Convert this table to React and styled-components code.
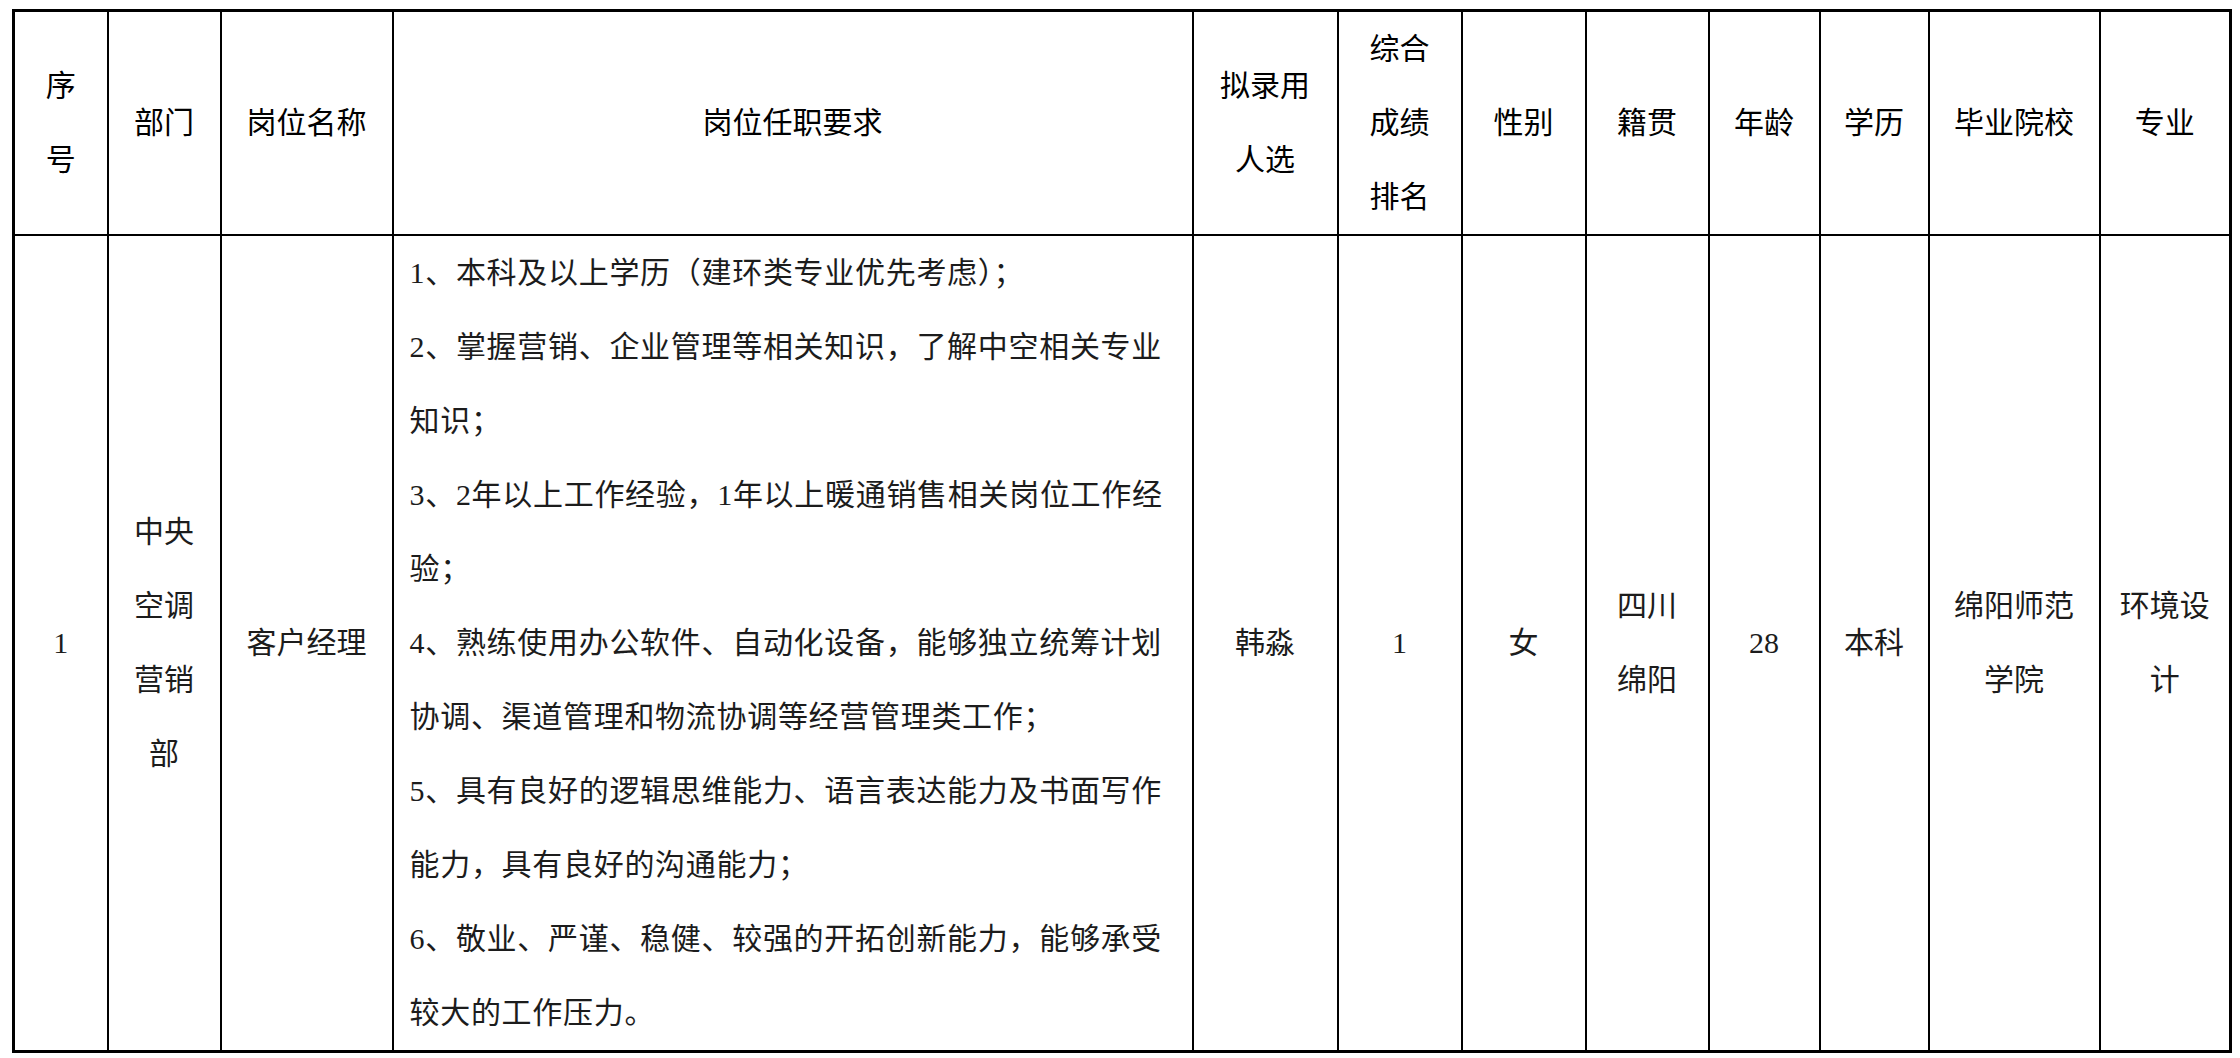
import React from 'react';
import styled, { createGlobalStyle } from 'styled-components';

const GlobalStyle = createGlobalStyle`
  html, body {
    margin: 0;
    padding: 0;
    background: #ffffff;
  }
  body {
    font-family: "Liberation Serif", "Noto Sans CJK SC", serif;
    color: #111;
  }
`;

const Page = styled.div`
  padding: 9px 0 0 12px;
  width: 2240px;
  height: 1058px;
  box-sizing: border-box;
  background: #fff;
`;

const Table = styled.table`
  width: 2217px;
  table-layout: fixed;
  border-collapse: collapse;
  border: 3px solid #000;
`;

const HeadRow = styled.tr`
  height: 224px;
`;

const BodyRow = styled.tr`
  height: 815px;
`;

const Cell = styled.td`
  border: 2px solid #000;
  padding: 0 14px;
  text-align: ${(p) => (p.$left ? 'left' : 'center')};
  vertical-align: ${(p) => (p.$top ? 'top' : 'middle')};
  font-family: "Liberation Serif", "Noto Sans CJK SC", serif;
  font-size: 30px;
  line-height: 74px;
  color: ${(p) => (p.$head ? '#000' : '#1c1c1c')};
  font-weight: 400;
  letter-spacing: ${(p) => (p.$left ? '0.7px' : '0')};
  white-space: nowrap;
  padding-left: ${(p) => (p.$left ? '16px' : '14px')};
`;

const Line = styled.div`
  height: 74px;
`;

const widths = [94, 113, 172, 800, 145, 124, 124, 123, 111, 109, 171, 131];

const headers = [
  ['序', '号'],
  ['部门'],
  ['岗位名称'],
  ['岗位任职要求'],
  ['拟录用', '人选'],
  ['综合', '成绩', '排名'],
  ['性别'],
  ['籍贯'],
  ['年龄'],
  ['学历'],
  ['毕业院校'],
  ['专业'],
];

const requirements = [
  '1、本科及以上学历（建环类专业优先考虑）；',
  '2、掌握营销、企业管理等相关知识，了解中空相关专业',
  '知识；',
  '3、2年以上工作经验，1年以上暖通销售相关岗位工作经',
  '验；',
  '4、熟练使用办公软件、自动化设备，能够独立统筹计划',
  '协调、渠道管理和物流协调等经营管理类工作；',
  '5、具有良好的逻辑思维能力、语言表达能力及书面写作',
  '能力，具有良好的沟通能力；',
  '6、敬业、严谨、稳健、较强的开拓创新能力，能够承受',
  '较大的工作压力。',
];

const row = [
  ['1'],
  ['中央', '空调', '营销', '部'],
  ['客户经理'],
  null,
  ['韩淼'],
  ['1'],
  ['女'],
  ['四川', '绵阳'],
  ['28'],
  ['本科'],
  ['绵阳师范', '学院'],
  ['环境设', '计'],
];

const Lines = ({ items }) => items.map((t, i) => <Line key={i}>{t}</Line>);

export default function App() {
  return (
    <Page>
      <GlobalStyle />
      <Table>
        <colgroup>
          {widths.map((w, i) => (
            <col key={i} style={{ width: w }} />
          ))}
        </colgroup>
        <tbody>
          <HeadRow>
            {headers.map((h, i) => (
              <Cell key={i} $head>
                <Lines items={h} />
              </Cell>
            ))}
          </HeadRow>
          <BodyRow>
            {row.map((c, i) =>
              c ? (
                <Cell key={i}>
                  <Lines items={c} />
                </Cell>
              ) : (
                <Cell key={i} $left $top>
                  <Lines items={requirements} />
                </Cell>
              )
            )}
          </BodyRow>
        </tbody>
      </Table>
    </Page>
  );
}
